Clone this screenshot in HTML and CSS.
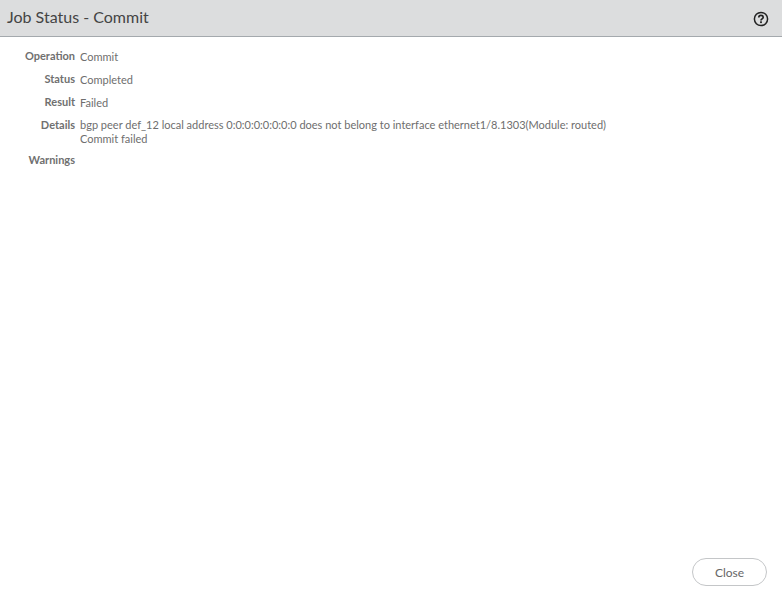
FILE: index.html
```html
<!DOCTYPE html>
<html lang="en">
<head>
    <meta charset="UTF-8">
    <title>Job Status - Commit</title>
    <link rel="stylesheet" href="styles.css">
</head>
<body>
    <div class="dialog">
        <div class="header">
            <span class="title">Job Status - Commit</span>
            <svg class="help" width="16" height="16" viewBox="0 0 16 16">
                <circle cx="8" cy="8" r="6.6" fill="none" stroke="#222" stroke-width="1.5"/>
                <path d="M5.8 6.5c0-1.4 1-2.2 2.2-2.2s2.2.8 2.2 2c0 1.6-2.2 1.6-2.2 3.1" fill="none" stroke="#222" stroke-width="1.7"/>
                <rect x="7.1" y="10.3" width="1.8" height="1.8" fill="#222"/>
            </svg>
        </div>
        <div class="content">
            <div class="row">
                <div class="label">Operation</div>
                <div class="value">Commit</div>
            </div>
            <div class="row">
                <div class="label">Status</div>
                <div class="value">Completed</div>
            </div>
            <div class="row">
                <div class="label">Result</div>
                <div class="value">Failed</div>
            </div>
            <div class="row row-details">
                <div class="label">Details</div>
                <div class="value">bgp peer def_12 local address 0:0:0:0:0:0:0:0 does not belong to interface ethernet1/8.1303(Module: routed)<br>Commit failed</div>
            </div>
            <div class="row">
                <div class="label">Warnings</div>
                <div class="value"></div>
            </div>
        </div>
        <div class="footer">
            <button class="close-btn">Close</button>
        </div>
    </div>
</body>
</html>
```

FILE: styles.css
```css
html, body {
    height: 100%;
}
body {
    margin: 0;
    font-family: 'Lato', sans-serif;
    background: white;
    color: #666;
}
.dialog {
    height: 601px;
    display: flex;
    flex-direction: column;
}
.header {
    height: 36px;
    background: #dcddde;
    border-bottom: 1px solid #a4a9ad;
    display: flex;
    align-items: center;
    justify-content: space-between;
    padding: 0 13px 0 7px;
}
.title {
    font-size: 16px;
    color: #444;
    margin-top: -4px;
}
.help {
    margin-top: 1px;
}
.content {
    flex: 1;
    padding-top: 13px;
    font-size: 11px;
}
.row {
    display: flex;
    gap: 5px;
    margin-bottom: 9px;
    line-height: 14px;
}
.row-details {
    margin-top: -1px;
    margin-bottom: 8px;
}
.label {
    width: 75px;
    text-align: right;
    font-weight: bold;
    color: #707070;
    margin-top: -1px;
}
.row-details .label {
    margin-top: 0;
}
.value {
    flex: 1;
    min-height: 14px;
    color: #6e6e6e;
}
.footer {
    display: flex;
    justify-content: flex-end;
    padding: 0 15px 15px 0;
}
.close-btn {
    width: 75px;
    height: 28px;
    background: white;
    border: 1px solid #c4c6c8;
    border-radius: 14px;
    font-family: 'Lato', sans-serif;
    font-size: 12px;
    color: #666;
}
```
